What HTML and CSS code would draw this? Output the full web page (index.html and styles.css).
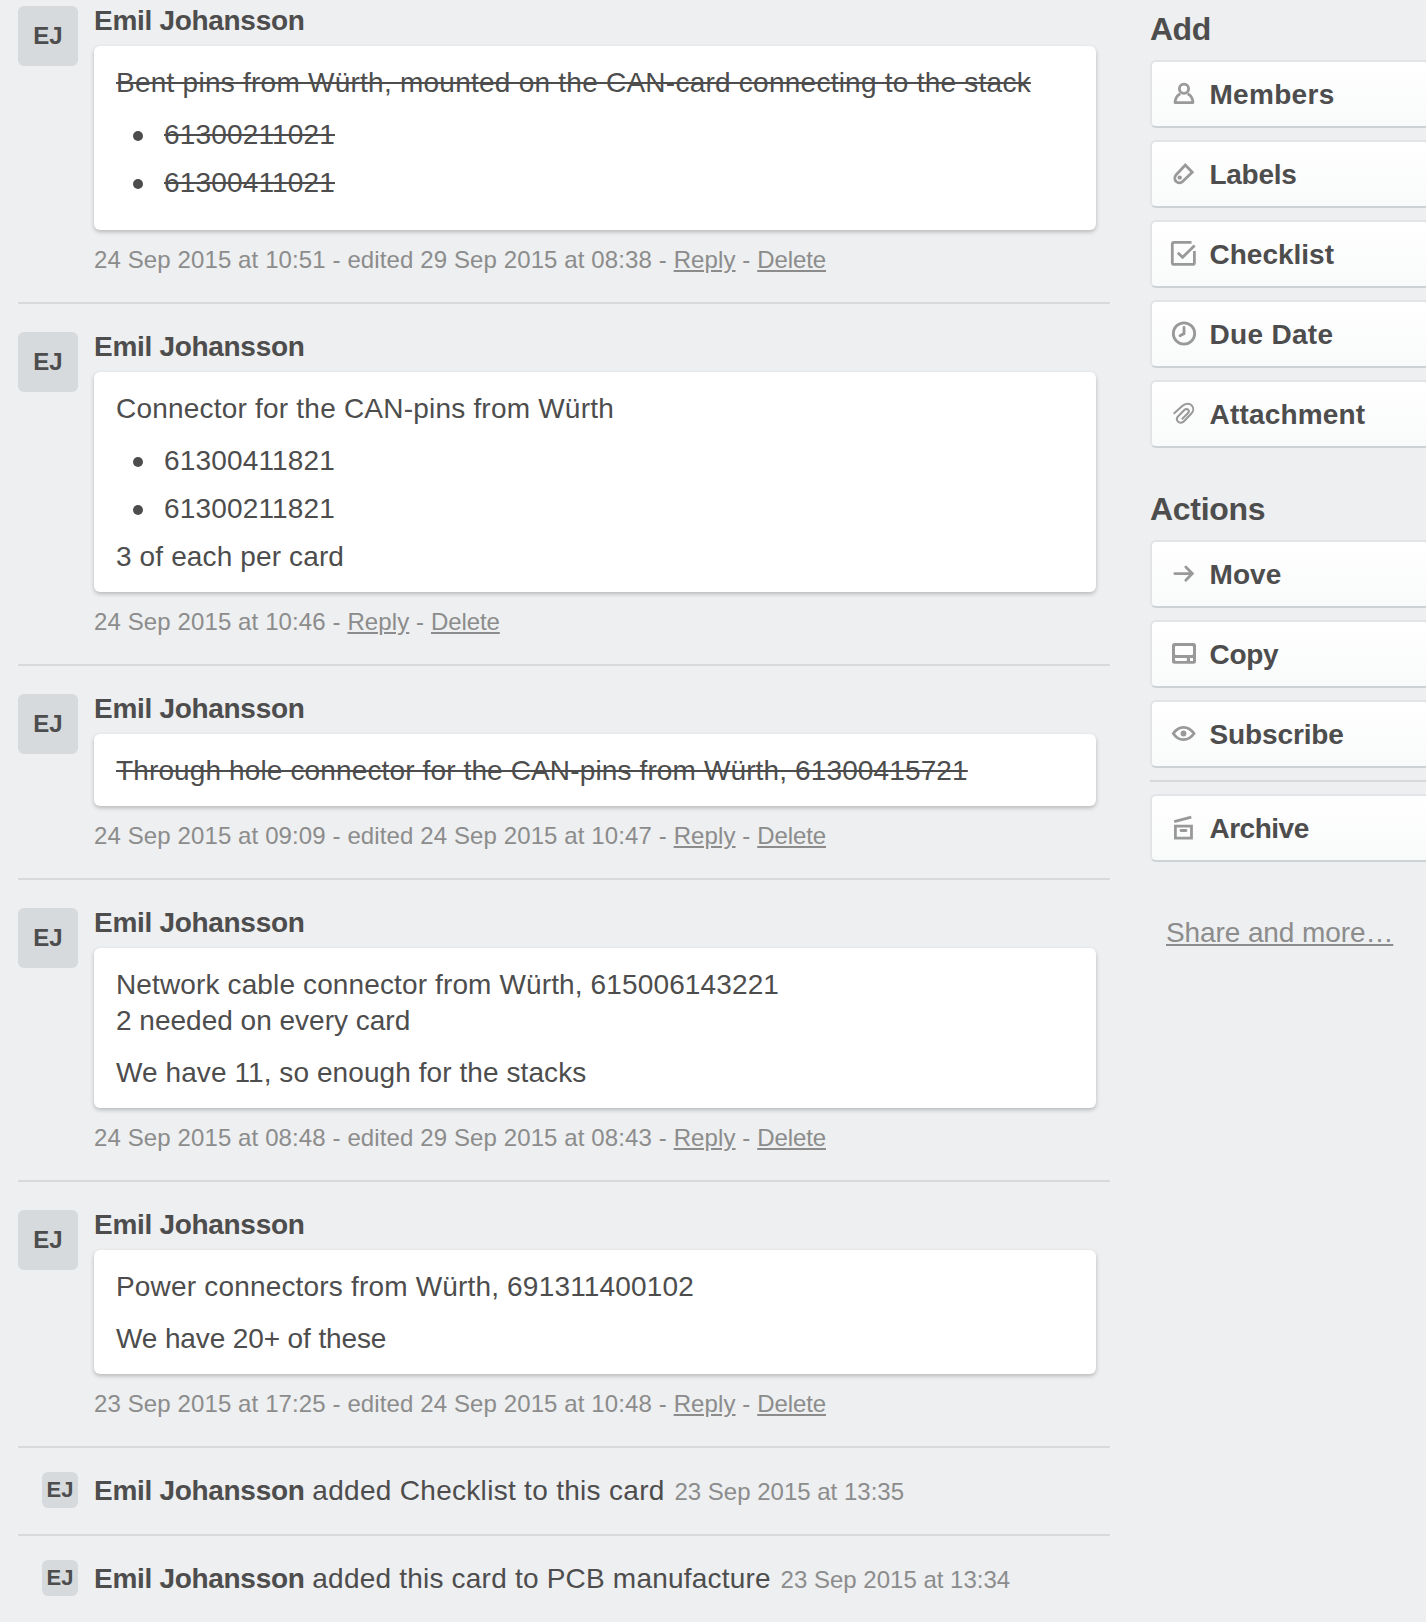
FILE: index.html
```html
<!DOCTYPE html>
<html lang="en">
<head>
<meta charset="utf-8">
<title>Card activity</title>
<link rel="stylesheet" href="styles.css">
</head>
<body>
<div class="window">
<main class="activity">
  <article class="entry">
    <div class="avatar">EJ</div>
    <div class="body">
      <h4 class="name">Emil Johansson</h4>
      <div class="comment">
        <p class="track-5"><del>Bent pins from Würth, mounted on the CAN-card connecting to the stack</del></p>
        <ul><li><del>61300211021</del></li><li><del>61300411021</del></li></ul>
      </div>
      <p class="meta">24 Sep 2015 at 10:51 - edited 29 Sep 2015 at 08:38 - <a>Reply</a> - <a class="delete">Delete</a></p>
    </div>
  </article>
  <article class="entry">
    <div class="avatar">EJ</div>
    <div class="body">
      <h4 class="name">Emil Johansson</h4>
      <div class="comment">
        <p class="track-4">Connector for the CAN-pins from Würth</p>
        <ul><li>61300411821</li><li>61300211821</li></ul>
        <p class="track-2">3 of each per card</p>
      </div>
      <p class="meta">24 Sep 2015 at 10:46 - <a>Reply</a> - <a class="delete">Delete</a></p>
    </div>
  </article>
  <article class="entry">
    <div class="avatar">EJ</div>
    <div class="body">
      <h4 class="name">Emil Johansson</h4>
      <div class="comment">
        <p class="track-2"><del>Through hole connector for the CAN-pins from Würth, 61300415721</del></p>
      </div>
      <p class="meta">24 Sep 2015 at 09:09 - edited 24 Sep 2015 at 10:47 - <a>Reply</a> - <a class="delete">Delete</a></p>
    </div>
  </article>
  <article class="entry">
    <div class="avatar">EJ</div>
    <div class="body">
      <h4 class="name">Emil Johansson</h4>
      <div class="comment">
        <p><span class="track-2">Network cable connector from Würth, 615006143221</span><br>2 needed on every card</p>
        <p class="track-1">We have 11, so enough for the stacks</p>
      </div>
      <p class="meta">24 Sep 2015 at 08:48 - edited 29 Sep 2015 at 08:43 - <a>Reply</a> - <a class="delete">Delete</a></p>
    </div>
  </article>
  <article class="entry">
    <div class="avatar">EJ</div>
    <div class="body">
      <h4 class="name">Emil Johansson</h4>
      <div class="comment">
        <p class="track-3">Power connectors from Würth, 691311400102</p>
        <p class="tight-1">We have 20+ of these</p>
      </div>
      <p class="meta">23 Sep 2015 at 17:25 - edited 24 Sep 2015 at 10:48 - <a>Reply</a> - <a class="delete">Delete</a></p>
    </div>
  </article>
  <article class="entry small">
    <div class="avatar">EJ</div>
    <p class="event"><b>Emil Johansson</b> <span class="track-6">added Checklist to this card</span> <time>23 Sep 2015 at 13:35</time></p>
  </article>
  <article class="entry small">
    <div class="avatar">EJ</div>
    <p class="event"><b>Emil Johansson</b> <span class="track-4">added this card to PCB manufacture</span> <time>23 Sep 2015 at 13:34</time></p>
  </article>
</main>
<aside class="sidebar">
  <h3 class="tight-3">Add</h3>
  <a class="button"><svg viewBox="0 0 28 28"><circle cx="14" cy="8.8" r="4.6"/><path d="M10.3 13.8C6.8 15.6 5.2 18.500 5 22.600H23C22.800 18.500 21.200 15.600 17.700 13.800" stroke-linejoin="round"/></svg><span class="track-6">Members</span></a>
  <a class="button"><svg viewBox="0 0 28 28"><path d="M15.300 5.100L22.200 12.200L12.900 21.200C10.900 23.200 8 23.200 6.200 21.500C4.300 19.600 4.400 16.700 6.200 14.800Z"/><circle class="solid" cx="9.700" cy="17.600" r="2.200"/></svg><span class="tight-2">Labels</span></a>
  <a class="button"><svg viewBox="0 0 28 28"><path d="M21.500 2.300H4Q2.300 2.300 2.300 4V22.700Q2.300 24.400 4 24.400H22.700Q24.400 24.400 24.400 22.700V11"/><path d="M7.800 12.800L12.600 17.300L24.600 5.500"/></svg><span>Checklist</span></a>
  <a class="button"><svg viewBox="0 0 28 28"><circle cx="14" cy="13.500" r="10.700"/><path d="M14 7.400V13.600L10 15.700" stroke-linecap="round"/></svg><span class="track-6">Due Date</span></a>
  <a class="button"><svg class="thin" viewBox="0 0 28 28"><path d="M3.700 13.800L12.500 5.800C15.500 3 19.500 3 21.700 5.400C23.900 7.800 23.600 11.400 21.200 13.800L14 21.200C12.200 23 9.600 23.200 8 21.600C6.400 20 6.700 17.700 8.400 16L14.600 9.800C15.700 8.700 17.200 8.700 18.200 9.700C19.100 10.700 19 12.100 17.900 13.200L11.800 19.200"/></svg><span class="track-3">Attachment</span></a>
  <h3 class="tight-2">Actions</h3>
  <a class="button"><svg viewBox="0 0 28 28"><path d="M4.800 13.600H21.500M15.800 7L22.300 13.600L15.800 20.200" stroke-linecap="round"/></svg><span class="track-1">Move</span></a>
  <a class="button"><svg viewBox="0 0 28 28"><path class="solid" fill-rule="evenodd" d="M4.500 3H23.500Q26 3 26 5.500V21.200Q26 23.700 23.500 23.700H4.500Q2 23.700 2 21.200V5.500Q2 3 4.500 3ZM6 6Q5 6 5 7V14Q5 15 6 15H22Q23 15 23 14V7Q23 6 22 6ZM5 18V20Q5 21 6 21H16Q17 21 17 20V19Q17 18 16 18ZM20 18V21H23V18Z"/></svg><span class="tight-2">Copy</span></a>
  <a class="button"><svg viewBox="0 0 28 28"><path d="M3.300 13.500C8.600 5.200 18.400 5.200 24 13.500C18.400 21.700 8.600 21.700 3.300 13.500Z"/><circle class="solid" cx="13.500" cy="13.500" r="2.900"/></svg><span class="tight-1">Subscribe</span></a>
  <hr>
  <a class="button"><svg viewBox="0 0 28 28"><path d="M4.200 7.700L21.300 3.200"/><path d="M5.400 12.200H21.500V24.200H5.400Z"/><path d="M11 16.500H16" stroke-linecap="round"/></svg><span class="tight-3">Archive</span></a>
  <p class="more"><a>Share and more…</a></p>
</aside>
</div>
</body>
</html>
```
FILE: styles.css
```css
* { box-sizing: border-box; }
body {
  margin: 0;
  background: #edeff0;
  color: #4d4d4d;
  font: 28px/36px "Liberation Sans", Arial, sans-serif;
}
h3, h4, p, ul { margin: 0; padding: 0; }

/* Letter-spacing steps */
.track-1 { letter-spacing: .08px; }
.track-2 { letter-spacing: .13px; }
.track-3 { letter-spacing: .18px; }
.track-4 { letter-spacing: .21px; }
.track-5 { letter-spacing: .245px; }
.track-6 { letter-spacing: .3px; }
.tight-1 { letter-spacing: -.12px; }
.tight-2 { letter-spacing: -.3px; }
.tight-3 { letter-spacing: -.5px; }

.window {
  display: flex;
  gap: 40px;
  width: 1426px;
  height: 1622px;
  overflow: hidden;
}
.activity {
  flex: none;
  width: 1110px;
  padding-left: 18px;
}
.entry {
  display: flex;
  gap: 16px;
  padding-top: 28px;
  border-bottom: 2px solid #d6dadc;
}
.entry:first-child { padding-top: 6px; }
.entry:last-child { border-bottom: 0; }
.avatar {
  flex: none;
  width: 60px;
  height: 60px;
  border-radius: 6px;
  background: #d6dadc;
  font-size: 24px;
  font-weight: bold;
  line-height: 60px;
  text-align: center;
}
.body {
  flex: 1;
  margin-top: -3px;
  padding-right: 14px;
}
.name {
  margin-bottom: 7px;
  font-size: 28px;
  letter-spacing: -.3px;
}
.comment {
  padding: 19px 22px 17px;
  border-radius: 6px;
  background: #fff;
  box-shadow: 0 2px 4px rgba(0, 0, 0, .23);
}
.comment p + p, .comment p + ul { margin-top: 16px; }
.comment li {
  display: flex;
  align-items: center;
  gap: 21px;
  margin: 0 0 12px 17px;
  letter-spacing: .16px;
}
.comment li::before {
  content: "";
  width: 10px;
  height: 10px;
  margin-top: 2px;
  border-radius: 50%;
  background: #4d4d4d;
}
.meta {
  padding: 12px 0 24px;
  color: #8c8c8c;
  font-size: 24px;
  letter-spacing: .11px;
}
.meta a, .more a {
  text-decoration: underline;
}
.meta .delete { letter-spacing: -.1px; }
.small {
  padding: 24px 0 26px 24px;
}
.small .avatar {
  width: 36px;
  height: 36px;
  font-size: 22px;
  line-height: 36px;
}
.event { margin: 1px 0 -1px; }
.event b { letter-spacing: -.3px; }
.event time {
  margin-left: 2px;
  color: #8c8c8c;
  font-size: 24px;
  line-height: 1;
}
.sidebar {
  flex: none;
  width: 280px;
  padding-top: 10px;
}
.sidebar h3 {
  margin-bottom: 12px;
  font-size: 32px;
  line-height: 38px;
}
.button + h3 { margin-top: 42px; }
.button {
  display: flex;
  align-items: center;
  gap: 12px;
  height: 68px;
  margin-bottom: 12px;
  padding-left: 18px;
  border: 2px solid #e2e4e6;
  border-bottom-color: #cdd2d4;
  border-radius: 6px;
  background: linear-gradient(#fff, #f9fafa);
  font-weight: bold;
}
.button span { margin: 2px 0 0 -.5px; }
.button svg {
  width: 28px;
  height: 28px;
  fill: none;
  stroke: #999;
  stroke-width: 2.8;
}
.button svg.thin { stroke-width: 2; }
.button .solid { fill: #999; stroke: none; }
.sidebar hr {
  height: 2px;
  margin: 0 0 12px;
  border: 0;
  background: #d6dadc;
}
.more {
  padding: 41px 0 0 16px;
  color: #8c8c8c;
  letter-spacing: -.1px;
}
```
